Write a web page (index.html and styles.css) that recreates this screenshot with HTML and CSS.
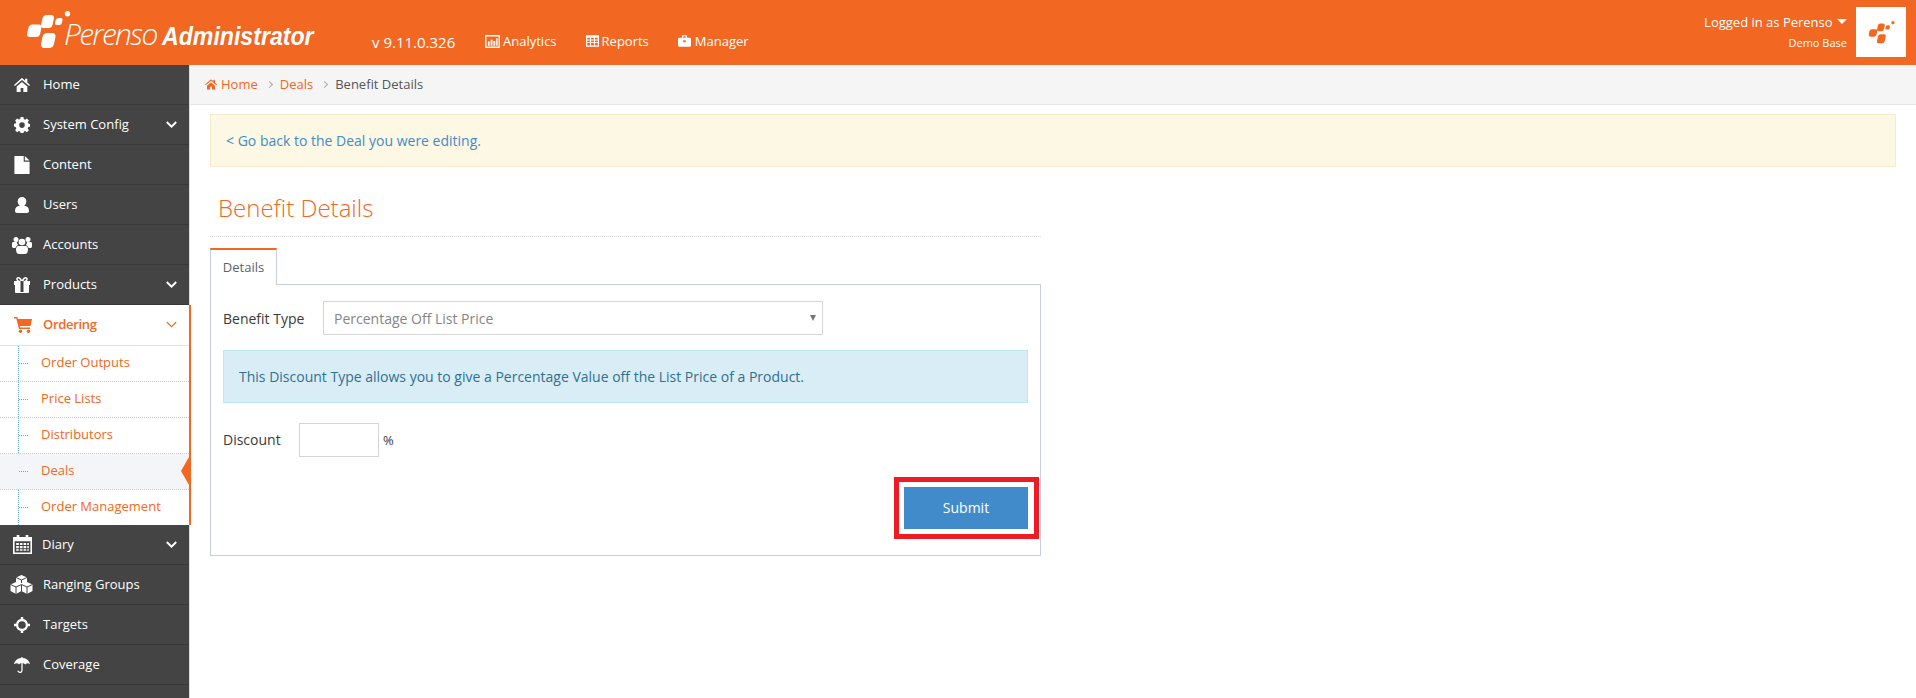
FILE: index.html
```html
<!DOCTYPE html>
<html lang="en">
<head>
<meta charset="utf-8">
<title>Perenso Administrator</title>
<link rel="stylesheet" href="styles.css">
</head>
<body>
<svg class="defs" width="0" height="0" aria-hidden="true">
  <symbol id="logo" viewBox="-1 0 45 38">
    <g transform="skewX(-12)">
      <rect x="5" y="13.500" width="13" height="12.500" rx="3.500"/>
      <rect x="17" y="4" width="11.500" height="13" rx="3.500"/>
      <rect x="21" y="22" width="13" height="15" rx="4"/>
      <rect x="30.500" y="7" width="7" height="7" rx="2.500"/>
    </g>
    <circle cx="40.500" cy="2.700" r="2.700"/>
  </symbol>
  <symbol id="chev" viewBox="0 0 11 7"><path d="M.8 1 5.500 5.700 10.200 1" fill="none"/></symbol>
  <symbol id="home" viewBox="0 0 18 16"><path d="M9 0 0 8l1 1.200L9 2.300l8 6.900L18 8l-3-2.700V1h-2.500v2.200zM3 9.800V16h4.500v-4.500h3V16H15V9.800L9 4.500z"/></symbol>
</svg>

<header class="topbar">
  <div class="brand">
    <svg class="brand-logo"><use href="#logo"/></svg>
    <span class="brand-name">Perenso</span>
    <span class="brand-role">Administrator</span>
  </div>
  <span class="version">v 9.11.0.326</span>
  <nav class="topnav">
    <a class="topnav-item"><svg class="topnav-icon topnav-icon-wide" viewBox="0 0 16 14"><path fill-rule="evenodd" d="M0 0h16v14H0zm1.500 1.500v11h13v-11z"/><path d="M3 7h2v4.500H3zM6 5h2v6.500H6zM9 6.500h2v5H9zM12 3.500h1.500v8H12z"/></svg>Analytics</a>
    <a class="topnav-item"><svg class="topnav-icon" viewBox="0 0 16 14"><path fill-rule="evenodd" d="M0 0h16v14H0zM1.500 3v2.200h3.500V3zm4.700 0v2.200h3.600V3zM11 3v2.200h3.500V3zM1.500 6.300v2.200h3.500V6.300zm4.700 0v2.200h3.600V6.300zm4.800 0v2.200h3.500V6.300zM1.500 9.600v2.900h3.500V9.600zm4.700 0v2.900h3.600V9.600zm4.800 0v2.900h3.500V9.600z"/></svg>Reports</a>
    <a class="topnav-item"><svg class="topnav-icon topnav-icon-case" viewBox="0 0 16 14"><path fill-rule="evenodd" d="M5 0h6v3h3.500A1.500 1.500 0 0 1 16 4.500V12.500A1.500 1.500 0 0 1 14.500 14h-13A1.500 1.500 0 0 1 0 12.500V4.500A1.500 1.500 0 0 1 1.500 3H5zM6.500 1.300V3h3V1.300zM6.500 6v2.500h3V6z"/></svg>Manager</a>
  </nav>
  <div class="account">
    <div class="account-text">
      <div class="account-user">Logged in as Perenso <span class="caret"></span></div>
      <div class="account-base">Demo Base</div>
    </div>
    <div class="account-logo"><svg class="account-mark"><use href="#logo"/></svg></div>
  </div>
</header>

<div class="shell">
  <aside class="sidebar">
    <a class="side-item"><svg class="side-icon" viewBox="0 0 18 16"><use href="#home"/></svg><span class="side-label">Home</span></a>
    <a class="side-item"><svg class="side-icon" viewBox="0 0 16 16"><path fill-rule="evenodd" d="M6.600 0h2.800l.4 2.100 1.300.6 1.800-1.200 2 2-1.200 1.800.6 1.300 1.700.3v2.800l-1.700.4-.6 1.300 1.200 1.800-2 2-1.800-1.200-1.300.6-.4 1.700H6.600l-.4-1.700-1.300-.6-1.800 1.200-2-2 1.200-1.800-.6-1.300L0 9.600V6.800l1.700-.3.600-1.300-1.200-1.800 2-2 1.800 1.200 1.300-.6zM8 5.300a2.800 2.800 0 1 0 0 5.600 2.800 2.800 0 0 0 0-5.600z"/></svg><span class="side-label">System Config</span><svg class="side-chev"><use href="#chev"/></svg></a>
    <a class="side-item"><svg class="side-icon side-icon-tall" viewBox="0 0 16 19"><path d="M0 0h9.800v6H16v13H0zM11 0l5 4.700h-5z"/></svg><span class="side-label">Content</span></a>
    <a class="side-item"><svg class="side-icon" viewBox="0 0 16 16"><path d="M8 0a4.300 4.300 0 0 1 4.300 4.500c0 2-1 3.500-2 4.200 3 .3 4.700 2 4.700 5.300 0 1.300-.8 2-2 2H3c-1.200 0-2-.7-2-2 0-3.300 1.700-5 4.700-5.300-1-.7-2-2.200-2-4.200A4.300 4.300 0 0 1 8 0z"/></svg><span class="side-label">Users</span></a>
    <a class="side-item"><svg class="side-icon side-icon-wide" viewBox="0 0 20 18"><circle cx="4" cy="3.500" r="2.500"/><circle cx="16" cy="3.500" r="2.500"/><circle cx="10" cy="6" r="3.300"/><path d="M0 7.500c0-1 .6-1.500 1.500-1.500h3.300c.1 1.300.6 2.300 1.400 3C4.700 9.500 3.800 10.500 3.500 12H1.500C.5 12 0 11.300 0 10.300zM20 7.500c0-1-.6-1.500-1.500-1.500h-3.300c-.1 1.300-.6 2.300-1.400 3 1.500.5 2.400 1.500 2.700 3h2c1 0 1.500-.7 1.500-1.700zM6.500 10h7c1.700 0 2.500 1.300 2.500 3.500 0 2.500-1 4.500-3 4.500H7c-2 0-3-2-3-4.500C4 11.300 4.800 10 6.500 10z"/></svg><span class="side-label">Accounts</span></a>
    <a class="side-item"><svg class="side-icon" viewBox="0 0 16 16"><path fill-rule="evenodd" d="M4.500 0C6 0 7.300 1.500 8 3c.7-1.500 2-3 3.500-3 1.300 0 2.300.9 2.300 2 0 .8-.3 1.500-.8 2H16v4h-1v7c0 .6-.4 1-1 1H2c-.6 0-1-.4-1-1V8H0V4h3c-.5-.5-.8-1.200-.8-2 0-1.100 1-2 2.300-2zM4.500 1.500c-.5 0-.8.3-.8.6 0 .9.900 1.900 2.800 1.900-.6-1.400-1.300-2.500-2-2.500zM11.500 1.500c-.7 0-1.400 1.100-2 2.500 1.900 0 2.800-1 2.800-1.900 0-.3-.3-.6-.8-.6zM6.500 4v11h3V4z"/></svg><span class="side-label">Products</span><svg class="side-chev"><use href="#chev"/></svg></a>

    <div class="side-group">
      <a class="side-item side-item-open"><svg class="side-icon side-icon-cart" viewBox="0 0 18 16"><path d="M0 0h3.300l.6 2H18l-1.400 7H6l.3 1.500H16V12H5L2.300 1.500H0z"/><circle cx="6.500" cy="14.300" r="1.700"/><circle cx="14.500" cy="14.300" r="1.700"/></svg><span class="side-label">Ordering</span><svg class="side-chev"><use href="#chev"/></svg></a>
      <ul class="sub-list">
        <li class="sub-item"><a>Order Outputs</a></li>
        <li class="sub-item"><a>Price Lists</a></li>
        <li class="sub-item"><a>Distributors</a></li>
        <li class="sub-item sub-item-active"><a>Deals</a><span class="sub-pointer"></span></li>
        <li class="sub-item"><a>Order Management</a></li>
      </ul>
    </div>

    <a class="side-item"><svg class="side-icon side-icon-big" viewBox="0 0 18 18"><path fill-rule="evenodd" d="M3.500 0H6v2h6V0h2.500v2H18v16H0V2h3.500zM1.500 6v10.500h15V6zM3 7.500h2.500v2H3zm3.500 0h2.500v2H6.500zm3.500 0h2.500v2H10zm3.500 0H15v2h-1.500zM3 10.500h2.500v2H3zm3.500 0h2.500v2H6.500zm3.500 0h2.500v2H10zm3.500 0H15v2h-1.500zM3 13.500h2.500V15H3zm3.500 0h2.500V15H6.500zm3.500 0h2.500V15H10zm3.500 0H15V15h-1.500z"/></svg><span class="side-label">Diary</span><svg class="side-chev"><use href="#chev"/></svg></a>
    <a class="side-item"><svg class="side-icon side-icon-cubes" viewBox="0 0 23 19"><polygon points="11.500,0 17,2.500 17,8.500 11.500,11 6,8.500 6,2.500"/><polygon points="6,7 11.500,9.500 11.500,16 6,19 .5,16 .5,9.500"/><polygon points="17,7 22.500,9.500 22.500,16 17,19 11.500,16 11.500,9.500"/><path class="cube-seam" d="M6 2.500 11.500 5 17 2.500M11.500 5V8M.5 9.500 6 12l5.500-2.500M6 12v7M11.500 9.500 17 12l5.500-2.500M17 12v7M11.500 10V16"/></svg><span class="side-label">Ranging Groups</span></a>
    <a class="side-item"><svg class="side-icon" viewBox="0 0 16 16"><path fill-rule="evenodd" d="M6.800 0h2.400v2.100a6 6 0 0 1 4.700 4.700H16v2.400h-2.100a6 6 0 0 1-4.700 4.700V16H6.800v-2.100a6 6 0 0 1-4.700-4.700H0V6.800h2.100a6 6 0 0 1 4.700-4.700zM8 4.200a3.800 3.800 0 1 0 0 7.600 3.800 3.800 0 0 0 0-7.600z"/></svg><span class="side-label">Targets</span></a>
    <a class="side-item"><svg class="side-icon" viewBox="0 0 18 18"><path d="M8.300 0h1.400v1.200c4.700.3 7.700 3.300 8.300 7-.8-.9-1.700-1.200-2.500-1.200-1 0-1.900.5-2.600 1.500C11.700 7.500 10.900 7 9.700 7v7.500c0 2-1.200 3.500-3 3.500-1.600 0-2.700-1-3-2.500h1.500c.2.700.8 1 1.500 1 .9 0 1.600-.8 1.600-2V7c-1.200 0-2 .5-2.700 1.500C4.900 7.500 4 7 3 7c-.9 0-1.900.3-3 1.200.6-3.700 3.600-6.700 8.300-7z"/></svg><span class="side-label">Coverage</span></a>
  </aside>

  <main class="content">
    <nav class="crumbs">
      <svg class="crumb-home" viewBox="0 0 18 16"><use href="#home"/></svg>
      <a class="crumb-link">Home</a>
      <span class="crumb-sep"></span>
      <a class="crumb-link">Deals</a>
      <span class="crumb-sep"></span>
      <span class="crumb-current">Benefit Details</span>
    </nav>

    <div class="page">
      <div class="alert-warn"><a>&lt; Go back to the Deal you were editing.</a></div>

      <section class="form-col">
        <h1 class="page-title">Benefit Details</h1>
        <div class="tabs"><span class="tab">Details</span></div>
        <div class="tab-panel">
          <div class="field">
            <label class="field-label field-label-type">Benefit Type</label>
            <div class="select">Percentage Off List Price<span class="select-arrow"></span></div>
          </div>
          <div class="alert-info">This Discount Type allows you to give a Percentage Value off the List Price of a Product.</div>
          <div class="field field-discount">
            <label class="field-label field-label-discount">Discount</label>
            <span class="text-input"></span>
            <span class="unit">%</span>
          </div>
          <div class="actions">
            <div class="highlight"><button class="btn-submit" type="button">Submit</button></div>
          </div>
        </div>
      </section>
    </div>
  </main>
</div>
</body>
</html>
```
FILE: styles.css
```css
* { box-sizing: border-box; }
html, body { margin: 0; height: 698px; overflow: hidden; }
body { font-family: "Open Sans", sans-serif; font-size: 14px; color: #444; background: #fff; display: flex; flex-direction: column; }
a { cursor: pointer; }
.defs { position: absolute; }

.topbar { height: 65px; flex: none; background: #f26722; color: #fff; display: flex; align-items: flex-start; }
.brand { width: 372px; height: 65px; flex: none; position: relative; display: flex; align-items: baseline; padding: 16px 0 0 64px; font-style: italic; }
.brand-logo { position: absolute; left: 26px; top: 11px; width: 45px; height: 38px; fill: #fff; }
.brand-name { font-size: 30px; font-weight: 300; letter-spacing: -1.7px; line-height: 36px; }
.brand-role { font-family: "Liberation Sans", sans-serif; font-size: 25px; font-weight: 700; margin-left: 5px; line-height: 36px; transform-origin: left; transform: scaleX(.925); white-space: nowrap; }
.version { font-size: 15px; line-height: 22px; margin-top: 31px; flex: none; width: 113px; }
.topnav { display: flex; gap: 29px; margin-top: 30px; }
.topnav-item { display: flex; align-items: center; font-size: 13px; line-height: 22px; color: #fff; }
.topnav-icon { width: 13px; height: 12px; fill: #fff; margin-right: 3px; }
.topnav-icon-wide { width: 15px; height: 13px; }
.topnav-icon-case { margin-right: 4px; }
.account { margin-left: auto; display: flex; padding: 7px 10px 0 0; }
.account-text { text-align: right; color: #fff; margin-right: 9px; }
.account-user { font-size: 13px; line-height: 18px; margin-top: 6px; }
.caret { display: inline-block; border: 5px solid transparent; border-top: 5px solid #fff; border-bottom: 0; vertical-align: 3px; margin-left: 1px; }
.account-base { font-size: 11px; line-height: 16px; margin-top: 4px; }
.account-logo { width: 50px; height: 50px; background: #fff; display: flex; align-items: center; justify-content: center; }
.account-mark { width: 27px; height: 23px; fill: #f26722; }

.shell { flex: 1; display: flex; min-height: 0; }
.sidebar { width: 190px; flex: none; background: #444; border-right: 1px solid #ddd; }
.side-item { height: 40px; display: flex; align-items: center; color: #fff; font-size: 13px; border-bottom: 1px solid #383838; padding-left: 14px; position: relative; }
.side-icon { width: 16px; height: 16px; fill: #fff; flex: none; }
.side-icon-tall { height: 18px; }
.side-icon-wide { width: 20px; margin-left: -2px; margin-right: -2px; height: 18px; }
.side-icon-cart { width: 18px; margin-right: -2px; }
.side-icon-big { width: 19px; height: 19px; margin-right: -3px; margin-left: -1px; }
.side-icon-cubes { width: 23px; height: 19px; margin-left: -4px; margin-right: -3px; }
.cube-seam { fill: none; stroke: #444; stroke-width: 1; }
.side-label { margin-left: 13px; margin-bottom: 2px; }
.side-chev { position: absolute; right: 12px; top: 16px; width: 11px; height: 7px; color: #fff; stroke: currentColor; stroke-width: 1.900; }

.side-group { width: 191px; height: 220px; background: #fff; border-right: 2px solid #f26722; position: relative; }
.side-item-open { color: #f26722; background: #fff; font-weight: 600; letter-spacing: -.3px; border-bottom: 1px solid #e2e2e2; height: 41px; }
.side-item-open .side-icon { fill: #f26722; }
.side-item-open .side-chev { color: #f26722; stroke-width: 1.100; }
.sub-list { list-style: none; margin: 0; padding: 0; position: relative; }
.sub-list::before { content: ""; position: absolute; left: 18px; top: 0; bottom: 0; border-left: 1px dotted #68a5d4; }
.sub-item { height: 36px; display: flex; align-items: center; padding: 0 0 3px 41px; font-size: 13px; color: #f26722; border-bottom: 1px dotted #ccc; position: relative; }
.sub-item:last-child { border-bottom: 0; height: 35px; }
.sub-item::before { content: ""; position: absolute; left: 19px; top: 17px; width: 9px; border-top: 1px dotted #68a5d4; }
.sub-item-active { background: #f4f5f9; }
.sub-pointer { position: absolute; right: 0; top: 3px; border: 14px solid transparent; border-left: 0; border-right: 8px solid #f26722; }

.content { flex: 1; min-width: 0; display: flex; flex-direction: column; }
.crumbs { height: 40px; flex: none; background: #f5f5f5; border-bottom: 1px solid #e5e5e5; display: flex; align-items: center; padding: 0 0 1px 15px; font-size: 13px; }
.crumb-home { width: 12px; height: 11px; fill: #f26722; margin-right: 4px; }
.crumb-link { color: #f26722; }
.crumb-sep { width: 5px; height: 5px; border-top: 1px solid #aaa; border-right: 1px solid #aaa; transform: rotate(45deg); margin: 0 8px 0 9px; }
.crumb-current { color: #555; }

.page { padding: 9px 20px 0; }
.alert-warn { height: 53px; background: #fcf8e3; border: 1px solid #faebcc; padding: 0 15px; display: flex; align-items: center; font-size: 14px; color: #428bca; }
.form-col { width: 831px; }
.page-title { margin: 0; height: 70px; padding: 25px 0 0 8px; font-size: 24px; line-height: 32px; font-weight: 300; color: #f26722; border-bottom: 1px dotted #ddd; }
.tabs { height: 48px; padding-top: 11px; margin-bottom: -1px; display: flex; }
.tab { width: 67px; height: 37px; background: #fff; border: 1px solid #c5d0dc; border-top: 2px solid #f26722; border-bottom: 0; display: flex; align-items: center; justify-content: center; padding-bottom: 2px; font-size: 13px; color: #576373; position: relative; z-index: 1; }
.tab-panel { height: 272px; border: 1px solid #c5d0dc; padding: 16px 12px 0; position: relative; }
.field { display: flex; align-items: center; }
.field-label { font-size: 14px; color: #393939; flex: none; }
.field-label-type { width: 100px; }
.field-label-discount { width: 76px; margin-bottom: 1px; }
.select { width: 500px; height: 34px; border: 1px solid #d5d5d5; font-size: 14px; color: #858585; display: flex; align-items: center; padding-left: 10px; position: relative; }
.select-arrow { position: absolute; right: 6px; top: 13px; border: 3px solid transparent; border-top: 6px solid #777; border-bottom: 0; }
.alert-info { margin-top: 15px; height: 53px; background: #d9edf7; border: 1px solid #bce8f1; display: flex; align-items: center; padding-left: 15px; font-size: 14px; color: #31708f; }
.field-discount { margin-top: 20px; }
.text-input { width: 80px; height: 34px; border: 1px solid #d5d5d5; background: #fff; flex: none; }
.unit { margin-left: 4px; font-size: 13px; color: #393939; }
.actions { display: flex; justify-content: flex-end; margin-top: 20px; margin-right: -11px; }
.highlight { width: 145px; height: 62px; border: 5px solid #ed1c24; padding: 5px; display: flex; }
.btn-submit { width: 124px; height: 42px; padding-bottom: 3px; background: #428bca; border: 0; color: #fff; font: 14px "Open Sans", sans-serif; }
```
